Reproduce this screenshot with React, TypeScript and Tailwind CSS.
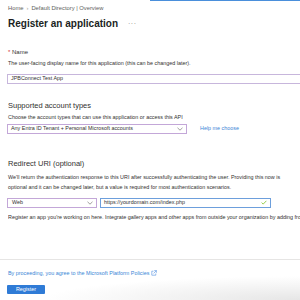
const font = { fontFamily: '"Liberation Sans", Arial, sans-serif' };

function Chevron() {
  return (
    <svg width="6" height="4" viewBox="0 0 6 4" className="shrink-0">
      <path d="M0.5 0.8 L3 3.2 L5.5 0.8" fill="none" stroke="#605e5c" strokeWidth="0.6" />
    </svg>
  );
}

function Check() {
  return (
    <svg width="6" height="5" viewBox="0 0 6 5" className="shrink-0">
      <path d="M0.6 2.6 L2.2 4.1 L5.4 0.8" fill="none" stroke="#6bb700" strokeWidth="0.7" />
    </svg>
  );
}

function ExternalLink() {
  return (
    <svg width="6" height="6" viewBox="0 0 6 6" className="shrink-0 ml-[2px]">
      <path d="M2.5 1.2 H0.8 V5.2 H4.8 V3.5" fill="none" stroke="#4f8fe0" strokeWidth="0.6" />
      <path d="M3.2 0.6 H5.4 V2.8 M5.4 0.6 L2.6 3.4" fill="none" stroke="#4f8fe0" strokeWidth="0.6" />
    </svg>
  );
}

export default function App() {
  return (
    <div className="relative w-[300px] h-[300px] overflow-hidden bg-white text-[#323130]" style={font}>
      {/* loading bar */}
      <div className="absolute top-0 left-[150px] right-0 h-px bg-[#4a8fdb]" />

      <div className="pl-[8px] pt-[4px]">
        {/* Breadcrumb */}
        <div className="flex items-center gap-[3px] text-[5.8px] leading-[8px] text-[#605e5c] whitespace-nowrap">
          <span>Home</span>
          <span className="text-[#a19f9d]">›</span>
          <span>Default Directory | Overview</span>
        </div>

        {/* Title */}
        <div className="mt-[4.5px] flex items-center">
          <h1 className="text-[10px] leading-[13px] font-bold text-[#201f1e] whitespace-nowrap">Register an application</h1>
          <span className="ml-[10px] text-[7px] leading-[13px] text-[#8a8886] tracking-[0.5px]">···</span>
        </div>

        {/* Name */}
        <div className="mt-[18px] text-[6px] leading-[8px] whitespace-nowrap">
          <span className="text-[#d13438]">* </span>Name
        </div>
        <p className="mt-[4.5px] text-[5.4px] leading-[7px] whitespace-nowrap">
          The user-facing display name for this application (this can be changed later).
        </p>
        <div className="mt-[6.5px] -ml-px h-[10px] w-[300px] border border-[#c7b6dc] flex items-center pl-[3px] text-[5.4px] whitespace-nowrap">
          JPBConnect Test App
        </div>

        {/* Supported account types */}
        <h2 className="mt-[17px] text-[7.5px] leading-[10px] whitespace-nowrap">Supported account types</h2>
        <p className="mt-[3.5px] text-[5.4px] leading-[7px] whitespace-nowrap">
          Choose the account types that can use this application or access this API
        </p>
        <div className="mt-[2.5px] -ml-px flex items-center">
          <div className="h-[10px] w-[180px] border border-[#c3a7d8] flex items-center justify-between pl-[3px] pr-[3px] text-[5.4px] whitespace-nowrap">
            <span>Any Entra ID Tenant + Personal Microsoft accounts</span>
            <Chevron />
          </div>
          <span className="ml-[13px] text-[5.4px] text-[#3a86d6] whitespace-nowrap">Help me choose</span>
        </div>

        {/* Redirect URI */}
        <h2 className="mt-[25px] text-[7.5px] leading-[10px] whitespace-nowrap">Redirect URI (optional)</h2>
        <p className="mt-[3px] text-[5.4px] leading-[10px] whitespace-nowrap">
          We'll return the authentication response to this URI after successfully authenticating the user. Providing this now is
          <br />
          optional and it can be changed later, but a value is required for most authentication scenarios.
        </p>
        <div className="mt-[6px] -ml-px flex items-center gap-[3px]">
          <div className="h-[10px] w-[90px] border border-[#c3a7d8] flex items-center justify-between pl-[4px] pr-[3px] text-[5.4px]">
            <span>Web</span>
            <Chevron />
          </div>
          <div className="h-[10px] w-[171px] border border-[#6d9fdc] flex items-center justify-between pl-[3px] pr-[3px] text-[5.4px] whitespace-nowrap">
            <span>https://yourdomain.com/index.php</span>
            <Check />
          </div>
        </div>
        <p className="mt-[6.5px] w-[292px] overflow-hidden text-[5.4px] leading-[7px] whitespace-nowrap">
          Register an app you're working on here. Integrate gallery apps and other apps from outside your organization by adding from Enterprise applications.
        </p>
      </div>

      {/* Footer */}
      <div className="mt-[38px] border-t border-[#e6e5e4] pl-[8px]">
        <div className="mt-[9.5px] flex items-center text-[5.4px] leading-[7px] text-[#3a86d6] whitespace-nowrap">
          <span>By proceeding, you agree to the Microsoft Platform Policies</span>
          <ExternalLink />
        </div>
        <button className="mt-[8.5px] -ml-px h-[9px] w-[38px] bg-[#2f7bd6] text-white text-[5.4px] flex items-center justify-center rounded-[1px]">
          Register
        </button>
      </div>

      {/* bottom shade */}
      <div className="absolute bottom-0 right-0 w-[260px] h-[24px] bg-[radial-gradient(ellipse_at_bottom_right,#e6e6e6,rgba(255,255,255,0)_70%)] pointer-events-none" />
    </div>
  );
}
